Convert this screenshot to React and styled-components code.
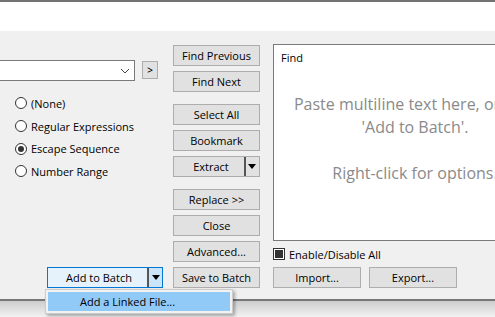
import React from 'react'
import styled, { createGlobalStyle } from 'styled-components'

const GlobalStyle = createGlobalStyle`
  html, body {
    margin: 0;
    padding: 0;
    overflow: hidden;
    background: #f0f0f0;
  }
  body {
    font-family: "Open Sans", "Noto Sans", sans-serif;
    font-size: 11px;
    color: #000;
  }
`

const Page = styled.div`
  width: 495px;
  height: 317px;
  display: flex;
  flex-direction: column;
  overflow: hidden;
`

const TopStrip = styled.div`
  height: 29px;
  background: #fff;
  border-top: 2px solid #737373;
  flex-shrink: 0;
`

const Panel = styled.div`
  height: 268px;
  background: #f0f0f0;
  display: flex;
  flex-shrink: 0;
  box-sizing: border-box;
  padding-bottom: 11px;
`

const BottomEdge = styled.div`
  height: 2px;
  background: #777;
  flex-shrink: 0;
`

const Shadow = styled.div`
  flex: 1;
  background: linear-gradient(#cdcdcd, #f2f2f2);
`

const LeftColumn = styled.div`
  width: 165px;
  flex-shrink: 0;
  display: flex;
  flex-direction: column;
  padding-top: 29px;
  box-sizing: border-box;
`

const ComboRow = styled.div`
  display: flex;
  align-items: flex-start;
  gap: 7px;
  margin-left: -10px;
`

const Combo = styled.div`
  width: 145px;
  height: 21px;
  box-sizing: border-box;
  background: #fff;
  border: 1px solid #7a7a7a;
  display: flex;
  align-items: center;
  justify-content: flex-end;
  padding-right: 4px;
`

const SmallButton = styled.div`
  width: 16px;
  height: 18px;
  margin-top: 1px;
  box-sizing: border-box;
  background: #e1e1e1;
  border: 1px solid #adadad;
  display: flex;
  align-items: center;
  justify-content: center;
  font-size: 10px;
  font-weight: 600;
`

const RadioGroup = styled.div`
  margin-top: 11px;
  padding-left: 15px;
  display: flex;
  flex-direction: column;
`

const RadioRow = styled.div`
  height: 22.7px;
  display: flex;
  align-items: center;
  gap: 4px;
`

const RadioCircle = styled.span`
  width: 12px;
  height: 12px;
  box-sizing: border-box;
  border: 1px solid #333;
  border-radius: 50%;
  background: #fff;
  display: flex;
  align-items: center;
  justify-content: center;

  &::after {
    content: '';
    width: 6px;
    height: 6px;
    border-radius: 50%;
    background: ${props => (props.checked ? '#333' : 'transparent')};
  }
`

const SplitWrap = styled.div`
  margin-top: auto;
  margin-left: 47px;
  position: relative;
  width: 116px;
`

const SplitButton = styled.div`
  height: 21px;
  box-sizing: border-box;
  border: 1px solid #0078d7;
  background: #e5f1fb;
  display: flex;
`

const SplitLabel = styled.div`
  flex: 1;
  display: flex;
  align-items: center;
  justify-content: center;
  padding-left: 3px;
`

const SplitArrow = styled.div`
  width: 13px;
  background: ${props => (props.active ? '#cce4f7' : 'transparent')};
  border-left: 2px solid #555;
  display: flex;
  align-items: center;
  justify-content: center;
`

const Triangle = styled.span`
  width: 0;
  height: 0;
  border-left: 4px solid transparent;
  border-right: 4px solid transparent;
  border-top: 5px solid #000;
`

const Menu = styled.div`
  position: absolute;
  top: 22px;
  left: -2px;
  width: 188px;
  height: 25px;
  box-sizing: border-box;
  background: #f2f2f2;
  border: 1px solid #cccccc;
  padding: 2px;
  box-shadow: 2px 2px 3px rgba(0, 0, 0, 0.3);
  z-index: 2;
`

const MenuItem = styled.div`
  height: 100%;
  background: #91c9f7;
  display: flex;
  align-items: center;
  padding-left: 32px;
`

const ButtonColumn = styled.div`
  width: 87px;
  flex-shrink: 0;
  margin-left: 8px;
  padding-top: 14px;
  display: flex;
  flex-direction: column;
  gap: 12px;
`

const ButtonGroup = styled.div`
  display: flex;
  flex-direction: column;
  gap: 5px;
`

const Button = styled.div`
  height: 21px;
  width: ${props => props.width || 'auto'};
  box-sizing: border-box;
  background: #e1e1e1;
  border: 1px solid #adadad;
  display: flex;
  align-items: center;
  justify-content: center;
  white-space: nowrap;
`

const ExtractButton = styled(Button)`
  justify-content: flex-start;
`

const ExtractLabel = styled.span`
  flex: 1;
  text-align: center;
  padding-left: 4px;
`

const ExtractArrow = styled.span`
  width: 12px;
  height: 100%;
  border-left: 2px solid #555;
  display: flex;
  align-items: center;
  justify-content: center;
  margin-right: 1px;
`

const RightColumn = styled.div`
  margin-left: 13px;
  padding-top: 13px;
  display: flex;
  flex-direction: column;
`

const FindBox = styled.div`
  width: 284px;
  height: 197px;
  box-sizing: border-box;
  background: #fff;
  border: 1px solid #7a7a7a;
  padding: 6px 7px;
  overflow: hidden;
`

const FindLabel = styled.div`
  line-height: 14px;
`

const Placeholder = styled.div`
  margin-top: 28px;
  text-align: center;
  font-size: 16px;
  line-height: 23px;
  color: #8a8a8a;
  white-space: nowrap;
`

const CheckRow = styled.div`
  margin-top: 7px;
  display: flex;
  align-items: center;
  gap: 4px;
  height: 12px;
`

const CheckBox = styled.span`
  width: 12px;
  height: 12px;
  box-sizing: border-box;
  border: 1px solid #333;
  background: #fff;
  padding: 1px;

  &::after {
    content: '';
    display: block;
    width: 8px;
    height: 8px;
    background: #333;
  }
`

const BottomRow = styled.div`
  margin-top: 7px;
  display: flex;
  gap: 8px;
`

const radios = [
  { label: '(None)' },
  { label: 'Regular Expressions' },
  { label: 'Escape Sequence', checked: true },
  { label: 'Number Range' },
]

const Chevron = () => (
  <svg width="10" height="6" viewBox="0 0 10 6">
    <path d="M1 1 L5 5 L9 1" fill="none" stroke="#444" strokeWidth="1" />
  </svg>
)

const App = () => (
  <Page>
    <GlobalStyle />
    <TopStrip />
    <Panel>
      <LeftColumn>
        <ComboRow>
          <Combo>
            <Chevron />
          </Combo>
          <SmallButton>&gt;</SmallButton>
        </ComboRow>
        <RadioGroup>
          {radios.map(r => (
            <RadioRow key={r.label}>
              <RadioCircle checked={r.checked} />
              {r.label}
            </RadioRow>
          ))}
        </RadioGroup>
        <SplitWrap>
          <SplitButton>
            <SplitLabel>Add to Batch</SplitLabel>
            <SplitArrow active>
              <Triangle />
            </SplitArrow>
          </SplitButton>
          <Menu>
            <MenuItem>Add a Linked File...</MenuItem>
          </Menu>
        </SplitWrap>
      </LeftColumn>

      <ButtonColumn>
        <ButtonGroup>
          <Button>Find Previous</Button>
          <Button>Find Next</Button>
        </ButtonGroup>
        <ButtonGroup>
          <Button>Select All</Button>
          <Button>Bookmark</Button>
          <ExtractButton>
            <ExtractLabel>Extract</ExtractLabel>
            <ExtractArrow>
              <Triangle />
            </ExtractArrow>
          </ExtractButton>
        </ButtonGroup>
        <ButtonGroup>
          <Button>Replace &gt;&gt;</Button>
          <Button>Close</Button>
          <Button>Advanced...</Button>
          <Button>Save to Batch</Button>
        </ButtonGroup>
      </ButtonColumn>

      <RightColumn>
        <FindBox>
          <FindLabel>Find</FindLabel>
          <Placeholder>
            Paste multiline text here, or click
            <br />
            'Add to Batch'.
            <br />
            <br />
            Right-click for options.
          </Placeholder>
        </FindBox>
        <CheckRow>
          <CheckBox />
          Enable/Disable All
        </CheckRow>
        <BottomRow>
          <Button width="88px">Import...</Button>
          <Button width="88px">Export...</Button>
        </BottomRow>
      </RightColumn>
    </Panel>
    <BottomEdge />
    <Shadow />
  </Page>
)

export default App
